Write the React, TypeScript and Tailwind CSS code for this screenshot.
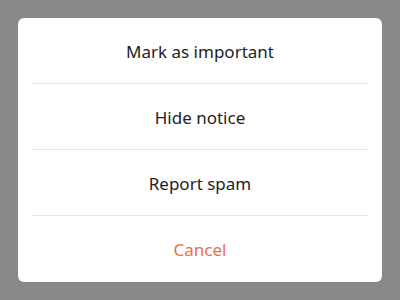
export default function App() {
  const items = ["Mark as important", "Hide notice", "Report spam"];
  return (
    <div className="flex h-[300px] w-[400px] items-center justify-center bg-[#888888] font-['Noto_Sans',sans-serif]">
      <div className="w-[364px] rounded-[6px] bg-white px-[14px]">
        {items.map((label) => (
          <button
            key={label}
            className="flex h-[66px] w-full items-center justify-center border-b border-[#e6e6e6] pt-[2px] text-[17px] text-[#1e1e1e]"
          >
            {label}
          </button>
        ))}
        <button className="flex h-[66px] w-full items-center justify-center pt-[2px] text-[17px] text-[#e2734f]">
          Cancel
        </button>
      </div>
    </div>
  );
}
